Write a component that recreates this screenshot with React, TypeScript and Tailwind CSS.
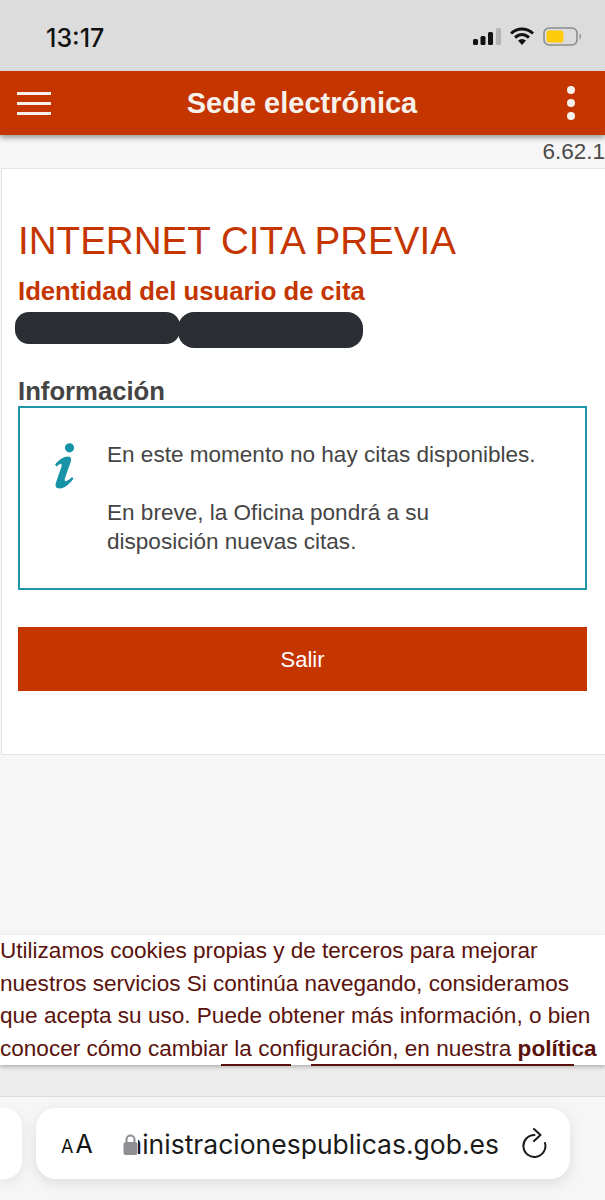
export default function App() {
  return (
    <div className="w-[605px] h-[1200px] overflow-hidden bg-[#f6f6f6] flex flex-col font-['Liberation_Sans',Arial,sans-serif]">
      {/* iOS status bar */}
      <div className="h-[71px] shrink-0 bg-[#dcdcdc] flex items-center justify-between pl-[46px] pr-[23px] pt-[4px]">
        <span className="font-['Inter',sans-serif] font-medium text-[25px] leading-none text-[#111] mt-[1px]">13:17</span>
        <div className="flex items-center gap-[9px] -mt-[3px]">
          <svg width="28" height="17" viewBox="0 0 28 17">
            <rect x="0" y="11" width="5" height="6" rx="1.5" fill="#111" />
            <rect x="7.5" y="8" width="5" height="9" rx="1.5" fill="#111" />
            <rect x="15" y="4" width="5" height="13" rx="1.5" fill="#111" />
            <rect x="23" y="0" width="5" height="17" rx="1.5" fill="#b4b4b4" />
          </svg>
          <svg width="24" height="18" viewBox="0 0 24 18">
            <path d="M1 6.5C7.5 0.5 16.5 0.5 23 6.5" fill="none" stroke="#111" strokeWidth="3" />
            <path d="M5 10.5C9.5 6.6 14.5 6.6 19 10.5" fill="none" stroke="#111" strokeWidth="3" />
            <path d="M12 18L8 13.6C10.5 11.6 13.5 11.6 16 13.6Z" fill="#111" />
          </svg>
          <svg width="39" height="19" viewBox="0 0 39 19">
            <rect x="1" y="1" width="33" height="17" rx="5" fill="none" stroke="#8c8c8c" strokeWidth="1.6" />
            <rect x="3.5" y="3.5" width="17" height="12" rx="2.5" fill="#fecb0a" />
            <path d="M36.5 6.5C38.5 7.5 38.5 11.5 36.5 12.5Z" fill="#8c8c8c" />
          </svg>
        </div>
      </div>

      {/* Site header */}
      <header className="h-[64px] shrink-0 bg-[#c43500] flex items-center justify-between pl-[17px] pr-[30px] shadow-[0_3px_5px_rgba(0,0,0,0.35)] z-10">
        <div className="flex flex-col gap-[7px] w-[34px]">
          <div className="h-[3px] bg-[#f7f1ec]" />
          <div className="h-[3px] bg-[#f7f1ec]" />
          <div className="h-[3px] bg-[#f7f1ec]" />
        </div>
        <h1 className="font-bold text-[29px] leading-none text-[#f7f1ec] ml-[2px]">Sede electrónica</h1>
        <div className="flex flex-col items-end gap-[5px] w-[24px]">
          <div className="w-[8px] h-[8px] rounded-full bg-[#f7f1ec]" />
          <div className="w-[8px] h-[8px] rounded-full bg-[#f7f1ec]" />
          <div className="w-[8px] h-[8px] rounded-full bg-[#f7f1ec]" />
        </div>
      </header>

      {/* Version */}
      <div className="h-[33px] shrink-0 flex items-center justify-end text-[22.5px] leading-none text-[#4a4a4a] pt-[1px]">
        6.62.1
      </div>

      {/* Card */}
      <main className="h-[587px] shrink-0 ml-px bg-white border border-[#e4e4e4] border-r-0 pl-[16px] pr-[18px] flex flex-col">
        <h2 className="mt-[50px] text-[38.6px] leading-[44px] text-[#c43500]">INTERNET CITA PREVIA</h2>
        <h3 className="mt-[13px] font-bold text-[25.7px] leading-[30px] text-[#c43500]">Identidad del usuario de cita</h3>
        <div className="flex items-start -ml-[3px] mt-[6px]">
          <div className="w-[165px] h-[32px] rounded-[14px] bg-[#2b2f33]" />
          <div className="w-[185px] h-[36px] rounded-[16px] bg-[#2b2f33] -ml-[2px]" />
        </div>
        <h3 className="mt-[28px] font-bold text-[25.7px] leading-[30px] text-[#444]">Información</h3>
        <div className="h-[184px] border-2 border-[#1d97a8] flex">
          <div className="w-[87px] shrink-0 pl-[35px] pt-[35px]">
            <svg width="20" height="46" viewBox="0 0 20 46">
              <circle cx="14.5" cy="4.8" r="4.6" fill="#1793a8" />
              <path d="M0 21.5C4 16.5 9 13.5 13 13.5C16.5 13.5 16.5 16.5 15.5 19.5L10 35C9.2 37.5 10 38.5 11.5 38C13.5 37.2 15.5 35.5 17 34L18.5 35.8C14 41.5 9.5 45.5 4.5 45.5C0.5 45.5 0 42.5 1 39.5L6.5 23.5C7 21.5 6.5 20.5 5 21C4 21.5 2.8 22.5 1.7 23.5Z" fill="#1793a8" />
            </svg>
          </div>
          <div className="pt-[32px] text-[22.55px] leading-[29px] text-[#454545] whitespace-nowrap">
            <p>En este momento no hay citas disponibles.</p>
            <p className="mt-[29px]">En breve, la Oficina pondrá a su<br />disposición nuevas citas.</p>
          </div>
        </div>
        <button className="mt-[37px] h-[64px] bg-[#c43500] text-white text-[22px] flex items-center justify-center">Salir</button>
      </main>

      {/* Cookie notice */}
      <div className="mt-[180px] h-[130px] shrink-0 bg-white text-[#5a120c] text-[22.55px] leading-[32.6px] whitespace-nowrap shadow-[0_2px_4px_rgba(0,0,0,0.25)] z-10 relative">
        <p>Utilizamos cookies propias y de terceros para mejorar</p>
        <p>nuestros servicios Si continúa navegando, consideramos</p>
        <p>que acepta su uso. Puede obtener más información, o bien</p>
        <p>conocer cómo cambiar la configuración, en nuestra <b>política</b></p>
        <div className="absolute left-[221px] bottom-[-1px] w-[70px] h-[2px] bg-[#5a120c]" />
        <div className="absolute left-[311px] bottom-[-1px] w-[263px] h-[2px] bg-[#5a120c]" />
      </div>

      {/* Safari band */}
      <div className="h-[32px] shrink-0 bg-[#ececec] border-b border-[#dcdcdc]" />
      <div className="flex-1 bg-[#f6f6f6] pt-[11px] flex gap-[14px]">
        <div className="w-[22px] h-[71px] shrink-0 bg-white rounded-r-[18px] shadow-[0_4px_14px_rgba(0,0,0,0.08)]" />
        <div className="w-[534px] h-[71px] shrink-0 bg-white rounded-[20px] shadow-[0_4px_14px_rgba(0,0,0,0.1)] flex items-center pl-[25px]">
          <span className="font-['Inter',sans-serif] text-[#111] leading-none flex items-baseline gap-[2px] w-[34px] shrink-0 mt-[2px]">
            <span className="text-[18px]">A</span><span className="text-[25px]">A</span>
          </span>
          <svg className="ml-[28px] shrink-0" width="15" height="22" viewBox="0 0 15 22">
            <path d="M3.5 10V6.5a4 4 0 0 1 8 0V10" fill="none" stroke="#8e8e93" strokeWidth="2" />
            <rect x="0.5" y="9" width="14" height="13" rx="2.5" fill="#8e8e93" />
          </svg>
          <div className="w-[361px] shrink-0 overflow-hidden flex justify-end mr-[22px]">
            <span className="font-['Inter',sans-serif] text-[26.5px] leading-[34px] text-[#1a1a1a] whitespace-nowrap">ministracionespublicas.gob.es</span>
          </div>
          <svg className="shrink-0" width="26" height="32" viewBox="0 0 26 32">
            <path d="M24 15A11 11 0 1 1 13.5 7" fill="none" stroke="#1a1a1a" strokeWidth="2" strokeLinecap="round" />
            <path d="M13 1L19.5 7L13 13" fill="none" stroke="#1a1a1a" strokeWidth="2" strokeLinecap="round" strokeLinejoin="round" />
          </svg>
        </div>
      </div>
    </div>
  );
}
